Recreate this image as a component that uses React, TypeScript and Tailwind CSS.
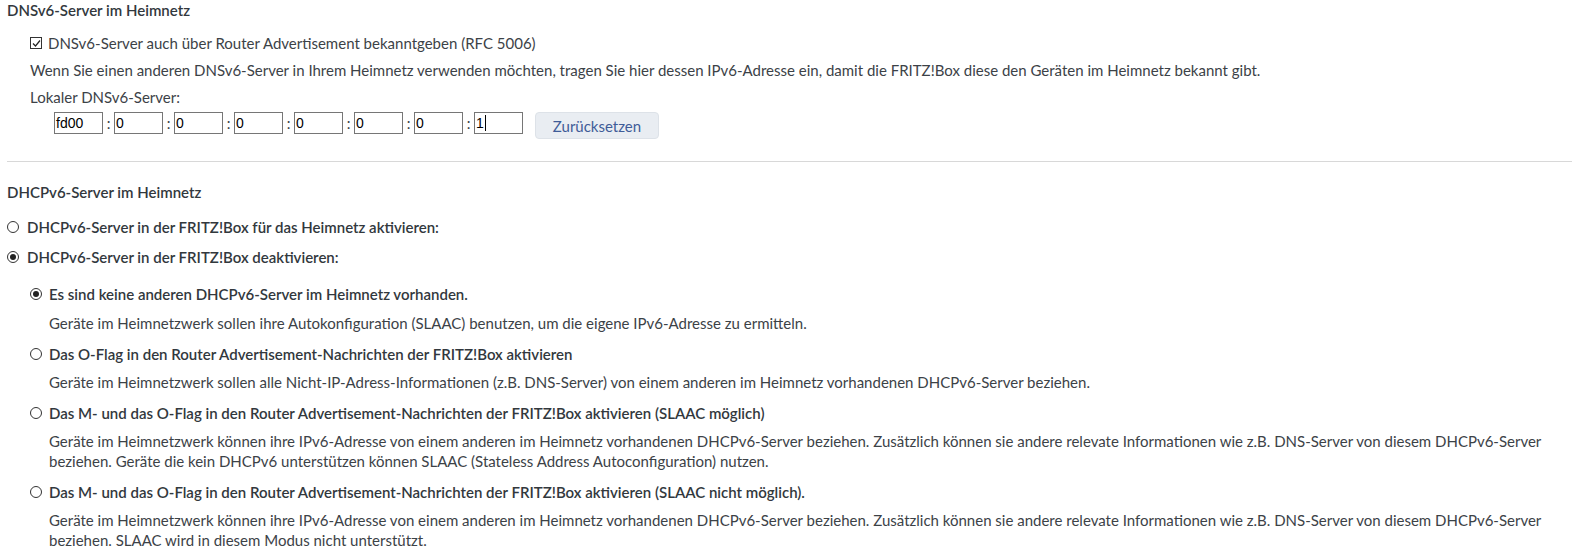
import React from 'react'

const font = { fontFamily: 'Lato, "Noto Sans", sans-serif' }

function Radio({ checked }: { checked?: boolean }) {
  return (
    <span className="flex h-[12px] w-[12px] shrink-0 items-center justify-center rounded-full border border-[#333]">
      {checked && <span className="h-[6px] w-[6px] rounded-full bg-[#222]" />}
    </span>
  )
}

function Checkbox() {
  return (
    <span className="flex h-[12px] w-[12px] shrink-0 items-center justify-center border border-[#333]">
      <svg width="9" height="9" viewBox="0 0 9 9" fill="none">
        <path d="M1 4.5 L3.5 7 L8 1.5" stroke="#222" strokeWidth="1.2" />
      </svg>
    </span>
  )
}

function AddrInput({ value, caret }: { value: string; caret?: boolean }) {
  return (
    <div
      className="flex h-[22px] w-[49px] shrink-0 items-center border border-[#767676] bg-white pl-px text-[14px] text-black"
      style={{ fontFamily: '"Liberation Sans", Arial, sans-serif' }}
    >
      {value}
      {caret && <span className="ml-px h-[16px] w-px bg-black" />}
    </div>
  )
}

function Option({
  checked,
  title,
  first,
  children,
}: {
  checked?: boolean
  title: string
  first?: boolean
  children: React.ReactNode
}) {
  return (
    <div className={first ? 'flex flex-col gap-[9px]' : 'flex flex-col gap-[8px]'}>
      <div className="flex items-center gap-[7px] font-semibold text-[#32383d]">
        <Radio checked={checked} />
        <span>{title}</span>
      </div>
      <p className="pl-[19px]">{children}</p>
    </div>
  )
}

export default function App() {
  const parts = ['0', '0', '0', '0', '0', '0']
  return (
    <div className="bg-white px-[7px] text-[15px] leading-5 text-[#3c4247]" style={font}>
      <h2 className="font-semibold text-[#32383d]">DNSv6-Server im Heimnetz</h2>

      <div className="pl-[23px]">
        <div className="mt-[13px] flex items-center gap-[6px]">
          <Checkbox />
          <span>DNSv6-Server auch über Router Advertisement bekanntgeben (RFC 5006)</span>
        </div>
        <p className="mt-[7px]">
          Wenn Sie einen anderen DNSv6-Server in Ihrem Heimnetz verwenden möchten, tragen Sie hier dessen
          IPv6-Adresse ein, damit die FRITZ!Box diese den Geräten im Heimnetz bekannt gibt.
        </p>
        <p className="mt-[7px]">Lokaler DNSv6-Server:</p>
        <div className="mt-[5px] flex items-start pl-[24px]">
          <AddrInput value="fd00" />
          {parts.map((p, i) => (
            <React.Fragment key={i}>
              <span className="w-[11px] text-center leading-[22px]">:</span>
              <AddrInput value={p} />
            </React.Fragment>
          ))}
          <span className="w-[11px] text-center leading-[22px]">:</span>
          <AddrInput value="1" caret />
          <button className="ml-[12px] h-[27px] w-[124px] rounded-[4px] border border-[#dde2e8] bg-[#e9edf2] text-[#3f5c98]">
            Zurücksetzen
          </button>
        </div>
      </div>

      <div className="mt-[22px] border-t border-[#d8d8d8]" />

      <h2 className="mt-[20px] font-semibold text-[#32383d]">DHCPv6-Server im Heimnetz</h2>

      <div className="mt-[15px] flex items-center gap-[8px] font-semibold text-[#32383d]">
        <Radio />
        <span>DHCPv6-Server in der FRITZ!Box für das Heimnetz aktivieren:</span>
      </div>
      <div className="mt-[10px] flex items-center gap-[8px] font-semibold text-[#32383d]">
        <Radio checked />
        <span>DHCPv6-Server in der FRITZ!Box deaktivieren:</span>
      </div>

      <div className="mt-[17px] flex flex-col gap-[11px] pl-[23px]">
        <Option checked first title="Es sind keine anderen DHCPv6-Server im Heimnetz vorhanden.">
          Geräte im Heimnetzwerk sollen ihre Autokonfiguration (SLAAC) benutzen, um die eigene IPv6-Adresse zu ermitteln.
        </Option>
        <Option title="Das O-Flag in den Router Advertisement-Nachrichten der FRITZ!Box aktivieren">
          Geräte im Heimnetzwerk sollen alle Nicht-IP-Adress-Informationen (z.B. DNS-Server) von einem anderen im
          Heimnetz vorhandenen DHCPv6-Server beziehen.
        </Option>
        <Option title="Das M- und das O-Flag in den Router Advertisement-Nachrichten der FRITZ!Box aktivieren (SLAAC möglich)">
          Geräte im Heimnetzwerk können ihre IPv6-Adresse von einem anderen im Heimnetz vorhandenen DHCPv6-Server
          beziehen. Zusätzlich können sie andere relevate Informationen wie z.B. DNS-Server von diesem DHCPv6-Server
          beziehen. Geräte die kein DHCPv6 unterstützen können SLAAC (Stateless Address Autoconfiguration) nutzen.
        </Option>
        <Option title="Das M- und das O-Flag in den Router Advertisement-Nachrichten der FRITZ!Box aktivieren (SLAAC nicht möglich).">
          Geräte im Heimnetzwerk können ihre IPv6-Adresse von einem anderen im Heimnetz vorhandenen DHCPv6-Server
          beziehen. Zusätzlich können sie andere relevate Informationen wie z.B. DNS-Server von diesem DHCPv6-Server
          beziehen. SLAAC wird in diesem Modus nicht unterstützt.
        </Option>
      </div>
    </div>
  )
}
